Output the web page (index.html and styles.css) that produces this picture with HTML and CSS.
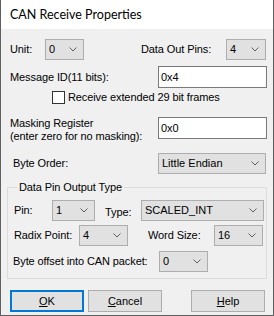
FILE: index.html
```html
<!DOCTYPE html>
<html>
<head>
<meta charset="utf-8">
<link rel="stylesheet" href="styles.css">
</head>
<body>
<div class="window">
  <div class="titlebar">CAN Receive Properties</div>
  <div class="client">
    <div class="row row-unit">
      <span class="lbl w-unit">Unit:</span>
      <div class="combo w-unitc"><span>0</span><svg class="chev" width="8" height="5" viewBox="0 0 8 5"><polyline points="0.5,0.5 4,4 7.5,0.5" fill="none" stroke="#606060" stroke-width="1"/></svg></div>
      <span class="lbl w-dop">Data Out Pins:</span>
      <div class="combo w-dopc"><span>4</span><svg class="chev" width="8" height="5" viewBox="0 0 8 5"><polyline points="0.5,0.5 4,4 7.5,0.5" fill="none" stroke="#606060" stroke-width="1"/></svg></div>
    </div>
    <div class="row row-msg">
      <span class="lbl w-wide">Message ID(11 bits):</span>
      <div class="edit">0x4</div>
    </div>
    <div class="row row-check">
      <span class="checkbox"></span>
      <span class="lbl check-text">Receive extended 29 bit frames</span>
    </div>
    <div class="row row-mask">
      <span class="lbl w-wide multi">Masking Register<br>(enter zero for no masking):</span>
      <div class="edit">0x0</div>
    </div>
    <div class="row row-order">
      <span class="lbl w-order">Byte Order:</span>
      <div class="combo w-orderc"><span>Little Endian</span><svg class="chev" width="8" height="5" viewBox="0 0 8 5"><polyline points="0.5,0.5 4,4 7.5,0.5" fill="none" stroke="#606060" stroke-width="1"/></svg></div>
    </div>
    <fieldset class="group">
      <legend>Data Pin Output Type</legend>
      <div class="row row-pin">
        <span class="lbl w-pin">Pin:</span>
        <div class="combo w-pinc"><span>1</span><svg class="chev" width="8" height="5" viewBox="0 0 8 5"><polyline points="0.5,0.5 4,4 7.5,0.5" fill="none" stroke="#606060" stroke-width="1"/></svg></div>
        <span class="lbl w-type">Type:</span>
        <div class="combo w-typec"><span>SCALED_INT</span><svg class="chev" width="8" height="5" viewBox="0 0 8 5"><polyline points="0.5,0.5 4,4 7.5,0.5" fill="none" stroke="#606060" stroke-width="1"/></svg></div>
      </div>
      <div class="row row-radix">
        <span class="lbl w-radix">Radix Point:</span>
        <div class="combo w-small"><span>4</span><svg class="chev" width="8" height="5" viewBox="0 0 8 5"><polyline points="0.5,0.5 4,4 7.5,0.5" fill="none" stroke="#606060" stroke-width="1"/></svg></div>
        <span class="lbl w-word">Word Size:</span>
        <div class="combo w-small"><span>16</span><svg class="chev" width="8" height="5" viewBox="0 0 8 5"><polyline points="0.5,0.5 4,4 7.5,0.5" fill="none" stroke="#606060" stroke-width="1"/></svg></div>
      </div>
      <div class="row row-offset">
        <span class="lbl w-offset">Byte offset into CAN packet:</span>
        <div class="combo w-small"><span>0</span><svg class="chev" width="8" height="5" viewBox="0 0 8 5"><polyline points="0.5,0.5 4,4 7.5,0.5" fill="none" stroke="#606060" stroke-width="1"/></svg></div>
      </div>
    </fieldset>
    <div class="row row-buttons">
      <div class="btn btn-default"><u>O</u>K</div>
      <div class="btn btn-cancel"><u>C</u>ancel</div>
      <div class="btn btn-help"><u>H</u>elp</div>
    </div>
  </div>
</div>
</body>
</html>
```
FILE: styles.css
```css
* { box-sizing: border-box; }
html, body { margin: 0; padding: 0; background: #ffffff; }
.window {
  width: 274px;
  height: 316px;
  border-left: 1px solid #5f5f5f;
  border-right: 1px solid #5f5f5f;
  border-bottom: 1px solid #5f5f5f;
  display: flex;
  flex-direction: column;
  font-family: "Liberation Sans", Arial, sans-serif;
  font-size: 11px;
  color: #000;
}
.titlebar {
  height: 29px;
  flex: none;
  background: #fff;
  font-family: Lato, "Liberation Sans", sans-serif;
  font-size: 12.5px;
  line-height: 29px;
  padding-left: 9px;
  padding-top: 1px;
  line-height: 27px;
  color: #000;
}
.client {
  flex: 1;
  background: #f0f0f0;
  display: flex;
  flex-direction: column;
}
.row { display: flex; align-items: center; flex: none; }
.lbl { white-space: nowrap; line-height: 13px; letter-spacing: -0.1px; }
.combo {
  height: 21px;
  background: #e1e1e1;
  border: 1px solid #adadad;
  display: flex;
  align-items: center;
  justify-content: space-between;
  padding: 0 6px 0 3px;
  line-height: 13px;
  white-space: nowrap;
}
.chev { display: block; flex: none; }
.edit {
  width: 109px;
  height: 22px;
  background: #fff;
  border: 1px solid #7a7a7a;
  padding-left: 2px;
  line-height: 20px;
}

.row-unit { margin-top: 10px; padding-left: 9px; }
.w-unit { width: 35px; }
.w-unitc { width: 39px; }
.w-dop { margin-left: 57px; width: 85px; }
.w-dopc { width: 40px; }

.row-msg { margin-top: 6px; padding-left: 9px; }
.w-wide { width: 148px; }

.row-check { margin-top: 3px; padding-left: 51px; height: 13px; }
.checkbox {
  width: 13px; height: 13px;
  border: 1px solid #333;
  background: #fff;
  flex: none;
}
.check-text { margin-left: 3px; }

.row-mask { margin-top: 13px; padding-left: 9px; align-items: flex-start; }
.multi { padding-top: 0px; }

.row-order { margin-top: 10px; padding-left: 12px; }
.w-order { width: 145px; }
.w-orderc { width: 108px; }

.group {
  margin: 7px 0 0 6px;
  width: 260px;
  border: 1px solid #dcdcdc;
  padding: 0 0 6px 0;
  min-width: 0;
  flex: none;
}
.group legend {
  margin-left: 9px;
  padding: 0 2px;
  line-height: 13px;
  letter-spacing: -0.1px;
}
.row-pin { margin-top: 6px; padding-left: 6px; }
.w-pin { width: 38px; }
.w-pinc { width: 43px; }
.w-type { margin-left: 10px; width: 36px; padding-top: 3px; }
.w-typec { width: 123px; }

.row-radix { margin-top: 4px; padding-left: 6px; }
.w-radix { width: 65px; }
.w-small { width: 49px; }
.w-word { margin-left: 20px; width: 66px; }

.row-offset { margin-top: 5px; padding-left: 5px; }
.w-offset { width: 146px; }

.row-buttons { margin-top: 11px; padding-left: 9px; }
.btn {
  width: 74px;
  height: 22px;
  background: #e1e1e1;
  border: 1px solid #adadad;
  text-align: center;
  line-height: 20px;
}
.btn-default { border: 2px solid #0078d7; line-height: 18px; }
.btn-cancel { margin-left: 4px; }
.btn-help { margin-left: 29px; }
```
